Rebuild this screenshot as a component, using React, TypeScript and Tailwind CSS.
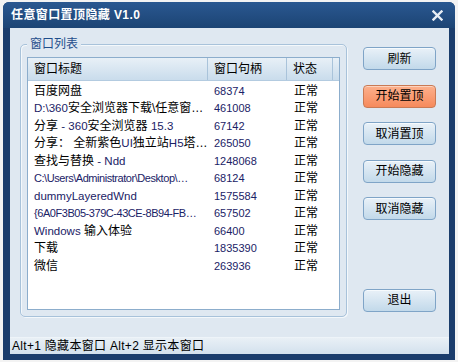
const font = { fontFamily: '"Liberation Sans", "Noto Sans CJK SC", sans-serif' }

type Row = { title: React.ReactNode; handle: string }

const L = ({ children, tight }: { children: React.ReactNode; tight?: boolean }) => (
  <span className={tight ? 'text-[11px] tracking-[-0.45px] text-[#1a2266]' : 'text-[11.5px] text-[#1a2266]'}>
    {children}
  </span>
)

const rows: Row[] = [
  { title: '百度网盘', handle: '68374' },
  { title: <><L>D:\360</L>安全浏览器下载\任意窗…</>, handle: '461008' },
  { title: <>分享 <L>- 360</L>安全浏览器 <L>15.3</L></>, handle: '67142' },
  { title: <>分享： 全新紫色<L>UI</L>独立站<L>H5</L>塔…</>, handle: '265050' },
  { title: <>查找与替换 <L>- Ndd</L></>, handle: '1248068' },
  { title: <L tight>C:\Users\Administrator\Desktop\…</L>, handle: '68124' },
  { title: <L>dummyLayeredWnd</L>, handle: '1575584' },
  { title: <L tight>{'{6A0F3B05-379C-43CE-8B94-FB…'}</L>, handle: '657502' },
  { title: <><L>Windows</L> 输入体验</>, handle: '66400' },
  { title: '下载', handle: '1835390' },
  { title: '微信', handle: '263936' },
]

const buttons = ['刷新', '开始置顶', '取消置顶', '开始隐藏', '取消隐藏']

function Btn({ label, hot }: { label: string; hot?: boolean }) {
  return (
    <button
      className={
        hot
          ? 'h-[23px] w-[73px] rounded-[4px] border border-[#c97a55] bg-gradient-to-b from-[#fcb08c] to-[#f68a5c] text-[12px] text-black shadow-[inset_0_1px_0_#fdd3be]'
          : 'h-[23px] w-[73px] rounded-[4px] border border-[#7fa4c7] bg-gradient-to-b from-[#e9f1f8] to-[#c2d9ea] text-[12px] text-black shadow-[inset_0_1px_0_#f6fafd]'
      }
    >
      {label}
    </button>
  )
}

export default function App() {
  return (
    <div className="w-[458px] h-[362px] bg-[#f3f3f3] pt-[2px] pl-[3px]" style={font}>
      <div className="w-[452px] h-[358px] bg-[#1b3d6c] rounded-t-[6px] flex flex-col">
        {/* title bar */}
        <div className="h-[26px] flex items-center justify-between pl-[8px] pr-[12px] rounded-t-[6px] bg-gradient-to-b from-[#2a5891] to-[#1c4474]">
          <span className="text-white font-bold text-[12px] tracking-[0.4px]">任意窗口置顶隐藏 V1.0</span>
          <svg width="11" height="11" viewBox="0 0 11 11">
            <path d="M1.5 1.5 L9.5 9.5 M9.5 1.5 L1.5 9.5" stroke="#e8eef5" strokeWidth="2.4" strokeLinecap="square" />
          </svg>
        </div>

        {/* client */}
        <div className="ml-[7px] mr-[6px] flex-1 flex flex-col bg-[#dfe8f1]">
          <div className="flex-1 flex pl-[10px] pt-[16px]">
            {/* group box */}
            <div className="relative w-[327px] h-[273px] rounded-[5px] border border-[#a8c2da] shadow-[inset_1px_1px_0_#f4f8fb,1px_1px_0_#f4f8fb] pt-[12px] px-[6px]">
              <span className="absolute -top-[9px] left-[6px] px-[3px] bg-[#dfe8f1] text-[12px] leading-[16px] text-[#1f4e8c]">窗口列表</span>
              {/* list view */}
              <div className="h-[253px] border border-[#8cadcc] bg-white">
                <div className="h-[23px] flex text-[12px] text-black bg-gradient-to-b from-[#e8f0f7] to-[#c9dcec] border-b border-[#b3cbe0]">
                  <div className="w-[180px] pl-[6px] flex items-center border-r border-[#a9c3da]">窗口标题</div>
                  <div className="w-[79px] pl-[6px] flex items-center border-r border-[#a9c3da]">窗口句柄</div>
                  <div className="w-[46px] pl-[6px] flex items-center border-r border-[#a9c3da]">状态</div>
                  <div className="flex-1" />
                </div>
                <div className="pt-[1px]">
                  {rows.map((r, i) => (
                    <div key={i} className="h-[17.5px] flex items-center text-[12px] text-black whitespace-nowrap">
                      <div className="w-[180px] pl-[6px] overflow-hidden">{r.title}</div>
                      <div className="w-[79px] pl-[6px] text-[11px] text-[#1a2266]">{r.handle}</div>
                      <div className="w-[46px] pl-[7px]">正常</div>
                    </div>
                  ))}
                </div>
              </div>
            </div>

            {/* buttons */}
            <div className="ml-[16px] pt-[3px] flex flex-col">
              <div className="flex flex-col gap-[14.5px]">
                {buttons.map((b, i) => (
                  <Btn key={b} label={b} hot={i === 1} />
                ))}
              </div>
              <div className="mt-[67px]">
                <Btn label="退出" />
              </div>
            </div>
          </div>

          {/* status bar */}
          <div className="h-[17px] flex items-center pl-[2px] text-[12px] text-black bg-gradient-to-b from-[#e9f0f6] to-[#d3e1ed] border-t border-[#eef4f9] tracking-[0.3px]">
            Alt+1 隐藏本窗口 Alt+2 显示本窗口
          </div>
        </div>
        <div className="h-[6px]" />
      </div>
    </div>
  )
}
